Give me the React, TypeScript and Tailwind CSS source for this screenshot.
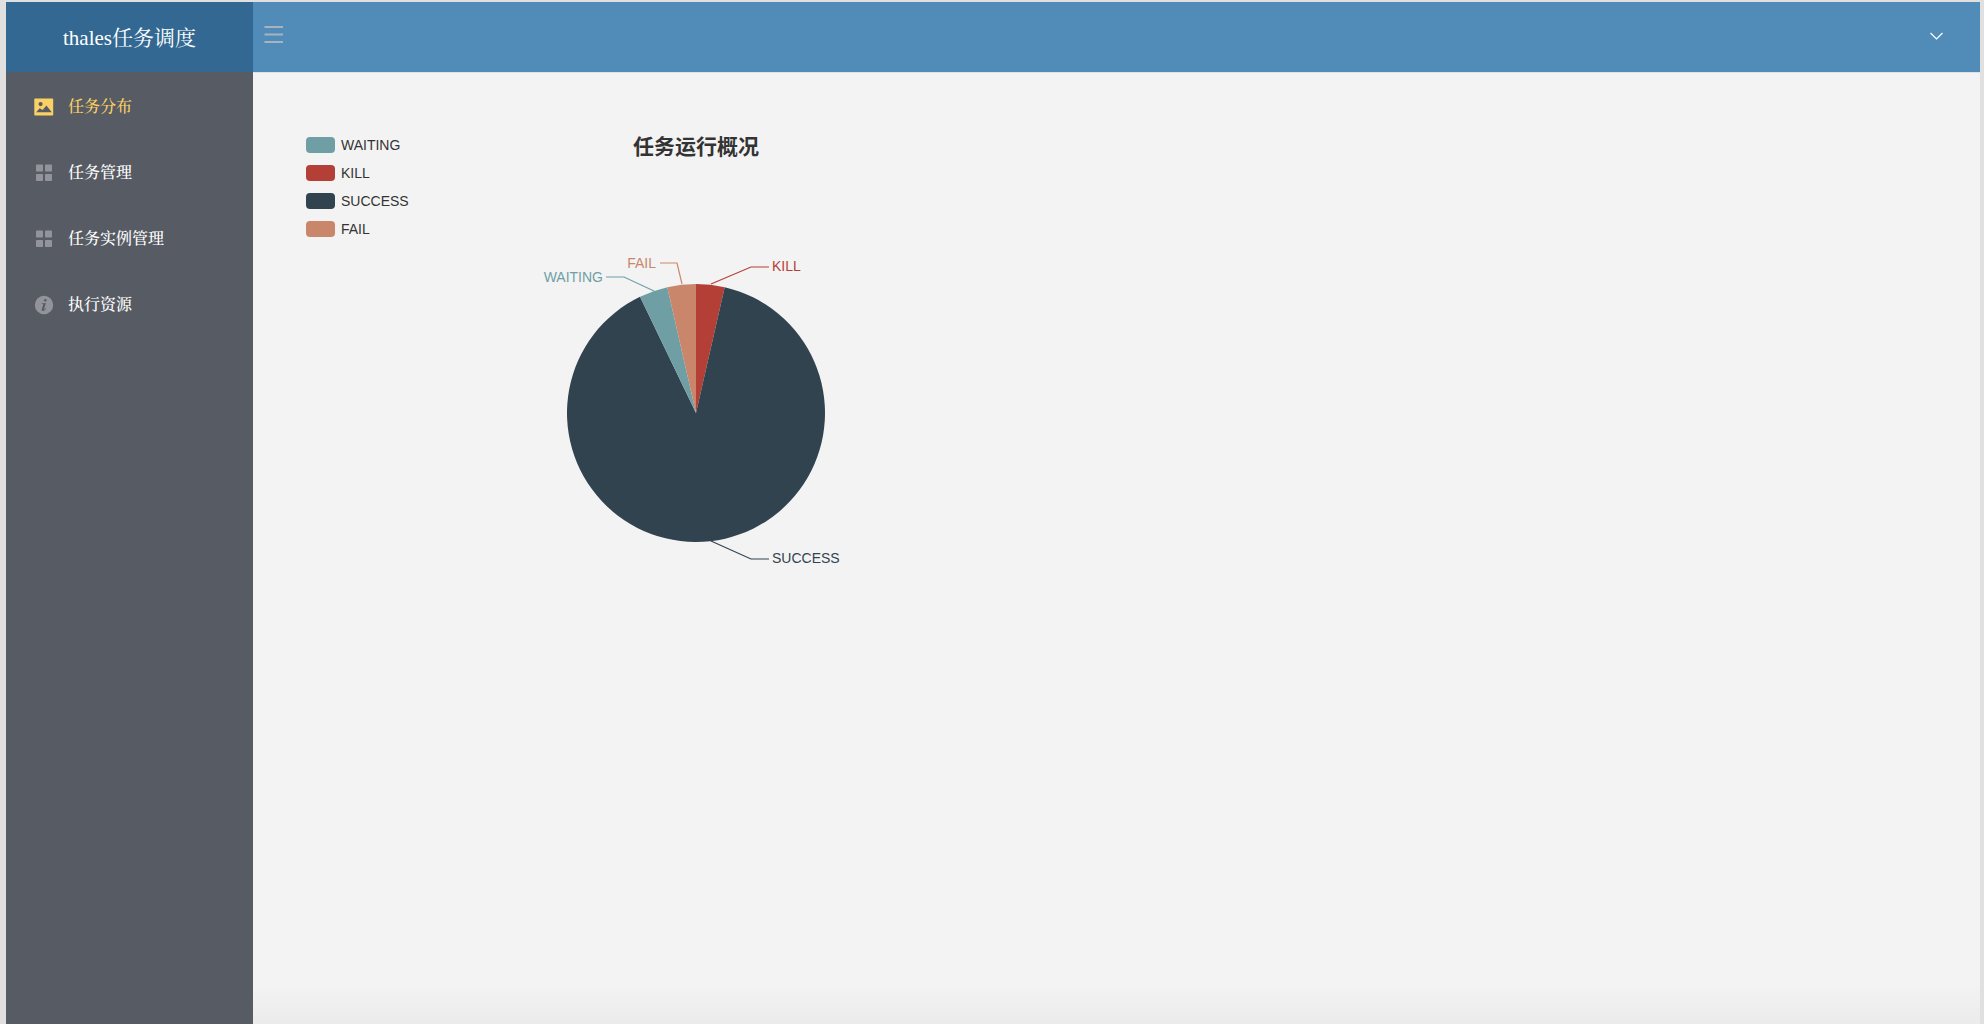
import React from "react";

type IconName = "image" | "grid" | "info";

const menu: { label: string; icon: IconName; active?: boolean }[] = [
  { label: "任务分布", icon: "image", active: true },
  { label: "任务管理", icon: "grid" },
  { label: "任务实例管理", icon: "grid" },
  { label: "执行资源", icon: "info" },
];

const legend = [
  { label: "WAITING", swatch: "bg-[#6f9fa5]" },
  { label: "KILL", swatch: "bg-[#b43f36]" },
  { label: "SUCCESS", swatch: "bg-[#324350]" },
  { label: "FAIL", swatch: "bg-[#c9866b]" },
];

const slices = [
  { label: "KILL", value: 1, color: "#b43f36", line: "175,44 215,27 233,27", x: 236, y: 31, anchor: "start" as const },
  { label: "SUCCESS", value: 25, color: "#324350", line: "175,301 215,319 233,319", x: 236, y: 323, anchor: "start" as const },
  { label: "WAITING", value: 1, color: "#6f9fa5", line: "118,51 88,37 70,37", x: 67, y: 42, anchor: "end" as const },
  { label: "FAIL", value: 1, color: "#c9866b", line: "146,44 141,23 124,23", x: 120, y: 28, anchor: "end" as const },
];

const CX = 160;
const CY = 173;
const R = 129;

function point(fraction: number) {
  const a = fraction * 2 * Math.PI;
  return `${CX + R * Math.sin(a)} ${CY - R * Math.cos(a)}`;
}

function PieChart() {
  const total = slices.reduce((sum, s) => sum + s.value, 0);
  let start = 0;
  return (
    <svg viewBox="0 0 320 340" width="320" height="340" role="img" aria-label="任务运行概况" className="block font-['Liberation_Sans',sans-serif] text-sm">
      {slices.map((s) => {
        const from = start / total;
        start += s.value;
        const to = start / total;
        const large = to - from > 0.5 ? 1 : 0;
        return (
          <g key={s.label} fill={s.color}>
            <path d={`M${CX} ${CY} L${point(from)} A${R} ${R} 0 ${large} 1 ${point(to)} Z`} />
            <polyline points={s.line} fill="none" stroke={s.color} strokeWidth="1.2" />
            <text x={s.x} y={s.y} textAnchor={s.anchor}>{s.label}</text>
          </g>
        );
      })}
    </svg>
  );
}

function MenuIcon({ name }: { name: IconName }) {
  if (name === "image") {
    return (
      <svg viewBox="0 0 20 20" className="size-5" aria-hidden="true">
        <path fill="currentColor" fillRule="evenodd" d="M1 1.500h17.500a.7.7 0 0 1 .7.700v15.600a.7.7 0 0 1-.7.700h-17.500a.7.7 0 0 1-.7-.700v-15.600a.7.7 0 0 1 .7-.700ZM6.600 5a2.100 2.100 0 1 0 0 4.200a2.100 2.100 0 0 0 0-4.200ZM2.200 15.300h15.600L12.400 8.600L8.600 13L5.700 11.200Z" />
      </svg>
    );
  }
  if (name === "grid") {
    return (
      <svg viewBox="0 0 20 20" className="size-5" aria-hidden="true" fill="currentColor">
        <rect x="2" y="1.500" width="7" height="7" rx="0.8" />
        <rect x="11" y="1.500" width="7" height="7" rx="0.8" />
        <rect x="2" y="11" width="7" height="7" rx="0.8" />
        <rect x="11" y="11" width="7" height="7" rx="0.8" />
      </svg>
    );
  }
  return (
    <svg viewBox="0 0 20 20" className="size-5" aria-hidden="true">
      <circle cx="10" cy="10" r="9.200" fill="currentColor" />
      <circle cx="11.300" cy="5.200" r="1.300" fill="#575b63" />
      <path d="M7.600 8.600L11.900 8L10 14.200Q9.900 14.900 10.500 14.500L11.900 13.100L12.300 13.500Q10.500 16 8.700 16Q7.300 16 7.800 14.300L9.200 9.700Q9.300 9.100 8.600 9.100H7.500Z" fill="#575b63" />
    </svg>
  );
}

export default function App() {
  return (
    <div className="min-h-screen bg-[#e0e0e0] pt-[2px] pr-1 pl-[6px] flex">
      <aside className="w-[247px] shrink-0 bg-[#575b63] font-['Liberation_Serif','Noto_Serif_CJK_SC','Noto_Sans_CJK_SC',serif]">
        <h1 className="h-[70px] pt-[3px] bg-[#326891] text-white text-[21px] flex items-center justify-center">thales任务调度</h1>
        <nav className="pt-[2px]">
          <ul>
            {menu.map((m) => (
              <li key={m.label}>
                <a href="#" aria-current={m.active ? "page" : undefined} className={`h-[66px] pl-7 flex items-center gap-[14px] text-base font-medium ${m.active ? "text-[#fad165]" : "text-white"}`}>
                  <span className={m.active ? "text-[#fad165]" : "text-[#93949b]"}>
                    <MenuIcon name={m.icon} />
                  </span>
                  {m.label}
                </a>
              </li>
            ))}
          </ul>
        </nav>
      </aside>
      <div className="flex-1 min-w-0 flex flex-col bg-[#f3f3f3]">
        <header className="h-[70px] bg-[#518cb8] flex items-center justify-between pl-[9px] pr-[34px]">
          <button type="button" aria-label="折叠菜单" className="size-6 text-[#a5b4bf]">
            <svg viewBox="0 0 24 24" className="size-6" fill="none" stroke="currentColor" strokeWidth="2">
              <path d="M2.500 2h18.500M2.500 9.500h18.500M2.500 17h18.500" />
            </svg>
          </button>
          <button type="button" aria-label="用户菜单" className="size-5 text-white">
            <svg viewBox="0 0 20 20" className="size-5" fill="none" stroke="currentColor" strokeWidth="1.200">
              <path d="M4.500 6l6 6l6-6" />
            </svg>
          </button>
        </header>
        <main className="flex-1 border-t border-[#d9e4ec] pl-[53px] pt-[57px] flex items-start bg-linear-to-t from-[#ebebeb] to-[#f3f3f3] to-[40px]">
          <ul className="w-[230px] pt-[5px] font-['Liberation_Sans',sans-serif] text-sm text-[#333333]">
            {legend.map((l) => (
              <li key={l.label} className="h-7">
                <button type="button" className="flex items-center gap-[6px] h-5">
                  <span className={`w-[29px] h-4 rounded ${l.swatch}`} />
                  {l.label}
                </button>
              </li>
            ))}
          </ul>
          <section className="w-[320px]">
            <h2 className="text-[21px] leading-[30px] font-bold text-center text-[#333333] font-['Noto_Sans_CJK_SC',sans-serif] mb-20">任务运行概况</h2>
            <PieChart />
          </section>
        </main>
      </div>
    </div>
  );
}
